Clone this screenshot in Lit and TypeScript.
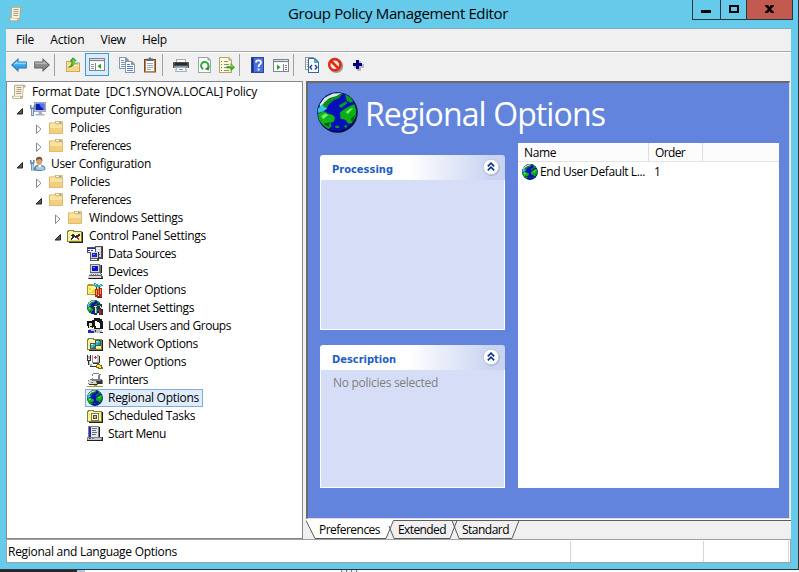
import { LitElement, html, css, svg, nothing, SVGTemplateResult } from "lit";
import { customElement, property } from "lit/decorators.js";

const p = (fill: string, d: string) => svg`<path fill=${fill} d=${d}></path>`;
const l = (stroke: string, d: string, w = 1) =>
  svg`<path fill="none" stroke=${stroke} stroke-width=${w} d=${d}></path>`;

const globe = svg`
  <circle cx="8" cy="8" r="7.9" fill="#001038"></circle>
  <circle cx="7.8" cy="7.7" r="7.5" fill="#0610b8"></circle>
  ${p("#0c8c24", "M.8 6.2 L2 3.4 L4.6 1.2 L8 .4 L10 .5 L8.6 2.4 L6.6 3.2 L4.8 4.6 L3.8 6.4 L2 7Z")}
  ${p("#dcecdc", "M1 5 L3 2.2 L6.3 .6 L9.4 .5 L7.6 1.6 L4.8 2.3 L2.8 4.1 L1.5 6Z")}
  ${p("#38c4dc", "M.4 6.6 L2 4.6 L2.8 5.8 L4 6.4 L2.4 7.6 L.4 8.2Z")}
  ${p("#10b41c", "M.4 8.6 L2.6 7.4 L4.2 8.4 L6.2 9 L7 10 L6.6 11.6 L5.2 12 L5.6 13.4 L4.4 14.4 L2.2 12.8 L.8 10.8Z")}
  ${p("#0cae18", "M9 8 L10.4 6.8 L12.6 5.6 L14.6 4.8 L15.3 7 L15.1 9.8 L13.6 12.2 L12.2 12.3 L11 10.8 L9.2 10.4Z")}
  ${p("#0c9c20", "M11 .9 L13 2 L14.2 3.6 L13 4.2 L11.6 3.4Z M8.4 5.4 L11.2 3.6 L11.8 4.4 L9.4 6.2Z M10.4 13.3 L11.8 12.8 L11.4 14.2Z M7.2 13.2 h1.4 v.8 h-1.400Z")}
  ${p("#70ec68", "M1.6 9.4 L3.2 8.4 L4.4 9 L2.4 10.6Z M11.2 7.8 L13 6.4 L14.2 6.2 L12 8.6Z")}
  ${p("#005c10", "M2.5 12.4 L5 11.8 L4.600 13.8Z M13 10.5 L15 9 L13.8 11.8Z")}`;

const folder98 = svg`
  ${p("#808040", "M0 3 h1 v-1 h6 v1 h8 v11 h-15Z")}
  ${p("#fdf6a0", "M1 4 h13 v9 h-13Z M2 3 h4 v1 h-4Z")}
  ${p("#e8dc60", "M2 6 h1v1h-1Z M2 9 h1v1h-1Z M3 12 h10v1h-10Z M12 5 h2v1h-2Z")}
  ${p("#202020", "M15 4 h1 v11 h-14 v-1 h13Z")}`;

const frame = svg`${p("#7b8490", "M0 2 h16 v13 h-16Z")}${p("#fff", "M1 6 h14 v8 h-14Z")}
  ${p("#d4dae2", "M1 3 h14 v1 h-14Z")}${p("#eef1f4", "M1 5 h14 v1 h-14Z")}${p("#fff", "M11 3h1v1h-1Z M13 3h1v1h-1Z")}`;

const ICONS: Record<string, SVGTemplateResult> = {
  globe,
  scroll: svg`
    ${p("#b8a47c", "M3 2 Q3 .8 5 .8 H13 Q14.8 .8 14.6 2.8 L14 3.6 H12.6 L12 13 Q12 15 10 15 H3 Q1 15 1 13 V11.8 H3Z")}
    ${p("#f8f0dc", "M4 1.8 H12 L11.4 12 H3.8Z")}
    ${p("#fffdf2", "M2 12.6 H9.2 V14.2 H3 Q2 14 2 12.6Z")}
    ${p("#e9d8ae", "M12.7 1.7 Q13.8 1.7 13.6 2.8 H12.6Z M9.8 12.6 H11 Q11 14 9.8 14.2Z")}
    ${l("#a99d86", "M5.5 3.5 H10.5 M5.5 5.5 H10.5 M5.3 7.5 H10.3 M5.3 9.5 H10.2")}`,
  folder: svg`
    ${p("#d5aa50", "M1 3.2 Q1 2.5 1.8 2.5 H7 V1.5 Q7 1 7.6 1 H14 Q14.8 1 14.8 1.7 V13.2 Q14.8 14 14 14 H1.8 Q1 14 1 13Z")}
    ${p("#fff", "M8 1.8 H13.8 V3.2 H8Z")}${p("#58a8dc", "M11 2 h2.4 v1 h-2.4Z")}
    ${p("#fae3a0", "M1.8 3.3 H7.3 L8.2 4.2 H14 V13.2 H1.8Z")}
    ${p("#f1cf7e", "M1.8 8 H14 V13.2 H1.8Z")}`,
  computer: svg`
    ${p("#8d98a8", "M4 0 H16 V10 H4Z")}${p("#dfe6ee", "M4.8 .8 H15.2 V9.2 H4.8Z")}
    ${p("#0a1cb4", "M5.5 1.6 H14.4 V8.2 H5.5Z")}${p("#4f78f0", "M9 1.6 H14.4 V8.2 L11 5Z")}
    ${p("#a8b0bc", "M8.5 10 h3.5 v2 h2.5 v1.5 h-9 V12 h3Z")}
    ${p("#6888a8", "M0 3 H1.500 V5.5 H3.5 V3 H5 V6.4 L3.9 7.5 V14 H1.1 V7.5 L0 6.4Z")}${p("#c8e0f4", "M2 7 h1 v6 h-1Z")}`,
  user: svg`
    ${p("#5a86ae", "M3.5 14.5 Q3.5 8.8 9 8.8 Q15.5 8.8 15.5 13 Q15 15 8 15Z")}${p("#a6cbe6", "M6 11 L9 9.5 L14 11 L14.5 13.4 Q10 14.500 6 13.600Z")}
    ${p("#fff", "M8 9 L10 12 L11.5 9Z")}
    <ellipse cx="9.2" cy="5" rx="3" ry="3.9" fill="#d8a070"></ellipse>
    ${p("#7b5536", "M6 5 Q5.4 .7 9.400 .7 Q12.8 .9 12.4 5.4 Q11.6 2.9 9.6 2.900 Q7.5 2.8 6 5Z")}
    ${p("#6888a8", "M0 4 H1.500 V6.2 H3 V4 H4.6 V7 L3.6 8.4 V14.5 H1 V8.4 L0 7Z")}${p("#c8e0f4", "M1.9 8 h.9 v6 h-.9Z")}`,
  cpanel: svg`${folder98}${p("#fff", "M4 6 h8 v6 h-8Z")}
    ${p("#303030", "M3 7 h2v-1h2v1h1v1h1v-1h2v-1h2v2h-1v1h-2v1h-2v-1h-1v1h-2v2h-1v-2h1v-2h-1v-1h-1Z")}${p("#e02020", "M10 9h1v1h1v2h-1v-1h-1Z")}${p("#2828c8", "M5 10h1v1h-1Z")}`,
  datasources: svg`
    ${p("#505058", "M0 1 H9 V7 H0Z M8 0 H16 V13 H12 V15 H3 V5 H8Z")}${p("#fff", "M1 2 H8 V6 H1Z")}
    ${p("#2020d0", "M1 2h7v1h-7Z M1 4h2v1h-2Z M4 4h2v1h-2Z")}
    ${p("#d4d4d4", "M9 1 H14 V11 H12 V6 H9Z M4 6 H11 V12 H4Z")}${p("#2020d0", "M5 7h5v4h-5Z")}${p("#58a0ff", "M6 8h2v1h-2Z")}${p("#f8f8f8", "M9 2h4v1h-4Z M9 4h4v1h-4Z M4 13h6v1h-6Z")}
    ${p("#303040", "M11 6h1v8h-1Z M15 1h1v12h-1Z")}${p("#20a020", "M12 8h1v1h-1Z")}`,
  devices: svg`
    ${p("#707078", "M3 0 H13 V1 H14 V9 H3Z")}${p("#dcdcdc", "M4 1 H12 V8 H4Z")}${p("#0a14c8", "M5 2 H11 V7 H5Z")}${p("#4fa0ff", "M6 3h2v1h-2Z")}
    ${p("#606068", "M3 8h11v2h1v2h1v3h-15v-3h1v-2h1Z")}${p("#d8d8d8", "M3 9h10v1h1v1h-12v-1h1Z M1 12h13v2h-13Z")}
    ${p("#808088", "M4 10h1v1h-1Z M6 10h1v1h-1Z M8 10h1v1h-1Z M10 10h1v1h-1Z")}${p("#181820", "M14 1h1v8h-1Z M2 14h14v1h-14Z")}`,
  folderopt: svg`
    ${p("#a89820", "M0 3h1v-1h5v1h6v10h-12Z")}${p("#fff28c", "M1 4h10v8h-10Z")}${p("#f0d820", "M2 6h2v2h-2Z M5 8h3v3h-3Z M2 10h2v1h-2Z")}
    ${p("#20a8c8", "M7 1h2v1h2v1h2v-1h2v1h1v1h-2v1h-6v-1h-2Z")}${p("#a0f0ff", "M8 2h1v1h-1Z M13 3h1v1h-1Z")}
    ${p("#303030", "M9 5h1v2h-1Z M12 5h1v2h-1Z M10 14h5v2h-5Z")}
    ${p("#c82010", "M8 7h3v8h-3Z M12 6h3v9h-3Z")}${p("#ff9080", "M9 8h1v5h-1Z M13 7h1v5h-1Z")}`,
  internet: svg`<g transform="scale(.9)">${globe}</g>
    ${p("#303038", "M5 6h2v-1h3v1h3v-2h2v3h-1v2h2v6h-4v-5h-2v5h-3v-6h-2Z")}${p("#e0e0e8", "M7 6h3v1h-1v6h-1v-6h-1Z M13 6h1v2h-1Z")}${p("#c82018", "M12 10h2v5h-1v-2h-1Z")}${p("#20b8c8", "M9 8h1v5h-1Z")}`,
  users: svg`
    ${p("#181818", "M7 0h6v1h2v2h1v8h-3v1h-6v-3h-2v-7h2Z")}${p("#fff", "M8 3h2v1h2v4h1v2h-4v-2h-1Z M12 5h1v3h-1Z")}
    ${p("#101010", "M0 3h6v2h1v3h-1v2h-5v-2h-1Z")}${p("#e8d8c0", "M2 5h3v3h-2v1h2v1h-3Z")}
    ${p("#c0c0c0", "M2 11h11v1h2v3h-14v-2h1Z")}${p("#1828b8", "M1 12h3v1h3v2h-6Z")}${p("#303030", "M8 12h1v2h-1Z M13 14h3v1h-3Z")}`,
  network: svg`${folder98}${p("#505050", "M8 4h6v6h-6Z M3 7h6v6h-6Z")}${p("#20c8c8", "M9 5h4v4h-4Z M4 8h4v4h-4Z")}${p("#b8ffff", "M9 5h2v1h-2Z M4 8h2v1h-2Z")}${p("#1890a0", "M11 7h2v2h-2Z M6 10h2v2h-2Z")}`,
  power: svg`
    ${p("#909090", "M5 1h7v8h-7Z")}${p("#fff", "M6 1h4v7h-4Z")}${p("#c8c8c8", "M10 2h2v6h-2Z")}${p("#e02020", "M7 3h3v1h-3Z M8 2h1v3h-1Z")}
    ${p("#303030", "M0 1h1v5h2v-5h1v6h-1v3h2v2h4v1h-6v-2h-2v-4h-1Z M12 2h1v7h-1Z M6 9h6v1h-6Z")}${p("#b0b0b0", "M1 2h2v3h-2Z M2 7h1v3h2v2h-2v-1h-1Z")}
    ${p("#806c10", "M10 10h3v1h2v2h1v2h-5v-1h-2v-3h1Z")}${p("#ffe060", "M10 11h3v1h1v2h-2v-1h-2Z")}`,
  printers: svg`
    ${p("#808088", "M5 2h1v-1h6v1h2v1h-1v4h2v1h1v4h-5v1h-8v-1h-2v-4h2v-1h2Z")}${p("#fff", "M6 2h6v1h-1v4h-5v-1h-1v-2h1Z")}
    ${p("#d8d8d0", "M2 8h3v1h5v1h4v1h-4v1h-8v-1h-1v-2h1Z")}${p("#30b030", "M4 10h2v1h-2Z")}${p("#303030", "M9 9h5v-1h1v4h-5Z M2 12h8v1h-8Z")}
    ${p("#a0a028", "M0 14h16v1h-16Z M7 13h3v2h-3Z")}`,
  tasks: svg`${folder98}${p("#807840", "M4 5h8v8h-8Z")}${p("#fff", "M5 6h6v6h-6Z")}${p("#484858", "M6 7h4v4h-4Z")}${p("#e8c040", "M7 8h2v2h-2Z")}`,
  startmenu: svg`
    ${p("#808080", "M1 0h11v11h3v4h-15v-4h1Z")}${p("#e8e8e8", "M2 1h9v10h-9Z")}${p("#1828c0", "M2 1h2v10h-2Z")}${p("#6c6c80", "M5 2h5v1h-5Z M5 4h4v1h-4Z M5 6h5v1h-5Z M5 8h4v1h-4Z")}
    ${p("#c8c8c8", "M1 12h13v2h-13Z")}${p("#202020", "M12 1h1v10h-1Z M0 14h16v1h-16Z M15 11h1v4h-1Z")}${p("#d02020", "M2 12h2v1h-2Z")}${p("#30a0d0", "M5 12h2v1h-2Z")}`,
  back: svg`${p("#2473ae", "M0 8 L7.5 1 V4.6 H15.8 V11.4 H7.5 V15Z")}${p("#35a5ec", "M1.6 8 L6.5 3.4 V5.6 H14.8 V10.4 H6.5 V12.6Z")}${p("#8cd4fa", "M1.8 7.8 L6.5 3.4 V5.6 H14.8 V7.2 H5Z")}`,
  forward: svg`${p("#606060", "M16 8 L8.5 1 V4.6 H.2 V11.4 H8.5 V15Z")}${p("#8b8b8b", "M14.4 8 L9.5 3.4 V5.6 H1.2 V10.4 H9.5 V12.6Z")}${p("#b4b4b4", "M13.6 7.3 L9.5 3.4 V5.6 H1.2 V7Z")}`,
  up: svg`${p("#c99c48", "M1 4 H7 L8 5.5 H15 V15 H1Z")}${p("#f6d88c", "M1.8 4.8 H6.5 L7.5 6.3 H14.2 V14.2 H1.8Z")}${p("#fff0b8", "M2 8 H14 V9 H2Z")}${p("#68b4e8", "M10 6h3v1.2h-3Z")}
    ${p("#2f9618", "M3.5 9.5 Q7 8.5 6.4 4.4 H4.5 L8 .2 L11.6 3.8 L9.6 4.2 Q10 9.8 3.5 10.8Z")}${p("#78d848", "M7.3 3.7 L8 1.6 L9.5 3.3 Q9.3 7.8 5.8 9.1Q8.4 7 7.3 3.7Z")}`,
  pane: svg`${frame}${l("#7b8490", "M6.5 7 V14")}${p("#8390a4", "M2 8h3v1h-3Z M2 10h3v1h-3Z M2 12h3v1h-3Z")}${p("#28a428", "M12 7.5 V13 L8.5 10.2Z")}`,
  run: svg`${frame}${l("#7b8490", "M10.5 7 V14")}${p("#68788e", "M12 8h2v1h-2Z M12 10h2v1h-2Z M12 12h2v1h-2Z")}${p("#28a428", "M4 7.5 V13 L7.5 10.2Z")}`,
  copy: svg`${p("#8b96a6", "M0 0 H7 L10 3 V12 H0Z")}${p("#fff", "M1 1 H6 V4 H9 V11 H1Z")}${l("#6c98cc", "M2 3.5h3 M2 5.5h5 M2 7.5h5 M2 9.5h5")}
    ${p("#8b96a6", "M6 4 H13 L16 7 V16 H6Z")}${p("#fff", "M7 5 H12 V8 H15 V15 H7Z")}${l("#4f80bc", "M8 7.5h3 M8 9.5h6 M8 11.5h6 M8 13.5h6")}`,
  paste: svg`${p("#7b4a26", "M2 2 H14 V15.5 H2Z")}${p("#bf844c", "M3 3h10v12h-10Z")}${p("#fbfcff", "M4 4 H12 V14 H4Z")}${p("#626a74", "M5 3 V1.5 H7 L7.6 .2 H8.5 L9.2 1.5 H11 V4 H5Z")}${l("#9ca8b8", "M5 6.5h6 M5 8.5h6 M5 10.5h6 M5 12.5h4")}`,
  print: svg`${p("#a4acb4", "M3 2 H13 V7 H3Z")}${p("#fafafa", "M4 3h8v3h-8Z")}${p("#4c5054", "M1 5 H15 Q16 5 16 6 V11 H0 V6 Q0 5 1 5Z")}${p("#8e9498", "M1 9 H15 V11 H1Z")}${p("#282a2c", "M2 6h12v2h-12Z")}${p("#a4b2bf", "M3 10 H13 L14 15 H2Z")}${p("#f0f6fa", "M4 11h8l.6 3h-9.2Z")}${p("#64a8d0", "M6 12h4v1h-4Z")}`,
  refresh: svg`${p("#9ba4ae", "M1 0 H11 L14 3 V16 H1Z")}${p("#fff", "M2 1 H10.5 V3.5 H13 V15 H2Z")}
    ${l("#32a83c", "M6.2 12 A3.7 3.7 0 1 1 10.8 10.8", 2)}${p("#249028", "M12.6 9 L11.8 13.6 L7.6 12Z")}`,
  export: svg`${p("#b6a468", "M0 0 H10 L13 3 V16 H0Z")}${p("#fffbe0", "M1 1 H9.5 V3.5 H12 V15 H1Z")}${l("#8c8c80", "M5 4.5h4 M5 7.5h5 M5 10.5h4 M5 13.5h5")}${p("#6c6c60", "M2 4h1v1h-1Z M2 7h1v1h-1Z M2 10h1v1h-1Z M2 13h1v1h-1Z")}
    ${p("#41a71e", "M7.5 9 H11.5 V6 L16 10.3 L11.5 14.6 V11.6 H7.5Z")}${p("#98de60", "M8.3 9.7 H12.2 V7.8 L14.6 10 H8.3Z")}`,
  help: svg`${p("#2b459c", "M1 0 H14 V16 H1Z")}${p("#4a70dc", "M4 1 H13 V15 H4Z")}${p("#1b2e7c", "M2 1h1v14h-1Z")}
    ${l("#fff", "M6 5.6 Q6 3.4 8.5 3.4 Q11 3.4 11 5.4 Q11 6.8 9.6 7.5 Q8.6 8.1 8.6 10", 1.8)}${p("#fff", "M7.6 11.4h2v2h-2Z")}`,
  xml: svg`${p("#8c949c", "M1 0H10V13H1Z")}${p("#fff", "M2 1H9V12H2Z")}${l("#9aa8b8", "M2.5 3.5h2 M2.5 5.5h2 M2.5 7.5h2 M2.5 9.5h2")}
    ${p("#34689c", "M4 1 H11 L15 5 V16 H4Z")}${p("#fff", "M5 2 H10 V6 H14 V15 H5Z")}${p("#48b0e8", "M10 1.6 L14.4 6 H10Z")}${l("#203c94", "M8 8 L6 10.2 L8 12.5 M11 8 L13 10.2 L11 12.5", 1.4)}`,
  deny: svg`<circle cx="9.2" cy="9" r="5.8" fill="none" stroke="#a09890" stroke-width="2.4"></circle>
    <circle cx="7.8" cy="7.7" r="5.6" fill="#f4eeec" stroke="#e02a12" stroke-width="2.6"></circle>${l("#e02a12", "M4 4 L11.5 11.5", 2.6)}`,
  plus: svg`${p("#b8b8c4", "M7 4h4v3h3v4h-3v3h-4v-3h-3v-4h3Z")}${p("#00007c", "M6 3h3v3h3v3h-3v3h-3v-3h-3V6h3Z")}`,
};

/** Icon on a 16-unit grid. */
@customElement("ui-icon")
export class UiIcon extends LitElement {
  @property() name = "";
  static styles = css`
    :host { display: block; width: 16px; height: 16px; flex: none; }
    svg { display: block; width: 100%; height: 100%; overflow: visible; }
  `;
  render() {
    return html`<svg viewBox="0 0 16 16">${ICONS[this.name] ?? nothing}</svg>`;
  }
}

/** One line of text whose tracking is adjusted to a given width. */
@customElement("ui-label")
export class UiLabel extends LitElement {
  @property() text = "";
  @property({ type: Number }) width = 0;
  static styles = css`
    :host { display: block; flex: none; white-space: pre; }
    span { display: inline-block; }
  `;
  render() {
    return html`<span>${this.text}</span>`;
  }
  updated() {
    const el = this.renderRoot.querySelector("span")!;
    el.style.letterSpacing = "0px";
    const natural = el.getBoundingClientRect().width;
    if (this.width && natural) el.style.letterSpacing = `${(this.width - natural) / this.text.length}px`;
  }
}

interface Node { level: number; icon: string; text: string; width: number; open?: boolean; selected?: boolean }

const TREE: Node[] = [
  { level: 0, icon: "scroll", text: "Format Date  [DC1.SYNOVA.LOCAL] Policy", width: 225 },
  { level: 1, icon: "computer", text: "Computer Configuration", width: 131, open: true },
  { level: 2, icon: "folder", text: "Policies", width: 40, open: false },
  { level: 2, icon: "folder", text: "Preferences", width: 61, open: false },
  { level: 1, icon: "user", text: "User Configuration", width: 100, open: true },
  { level: 2, icon: "folder", text: "Policies", width: 40, open: false },
  { level: 2, icon: "folder", text: "Preferences", width: 61, open: true },
  { level: 3, icon: "folder", text: "Windows Settings", width: 94, open: false },
  { level: 3, icon: "cpanel", text: "Control Panel Settings", width: 117, open: true },
  { level: 4, icon: "datasources", text: "Data Sources", width: 68 },
  { level: 4, icon: "devices", text: "Devices", width: 40 },
  { level: 4, icon: "folderopt", text: "Folder Options", width: 78 },
  { level: 4, icon: "internet", text: "Internet Settings", width: 86 },
  { level: 4, icon: "users", text: "Local Users and Groups", width: 123 },
  { level: 4, icon: "network", text: "Network Options", width: 90 },
  { level: 4, icon: "power", text: "Power Options", width: 78 },
  { level: 4, icon: "printers", text: "Printers", width: 40 },
  { level: 4, icon: "globe", text: "Regional Options", width: 91, selected: true },
  { level: 4, icon: "tasks", text: "Scheduled Tasks", width: 87 },
  { level: 4, icon: "startmenu", text: "Start Menu", width: 58 },
];

@customElement("policy-tree")
export class PolicyTree extends LitElement {
  static styles = css`
    :host { display: block; padding-top: 1px; }
    .row { display: flex; align-items: center; height: 18px; padding-left: 2px; }
    .level-1 { padding-left: 9px; }
    .level-2 { padding-left: 28px; }
    .level-3 { padding-left: 47px; }
    .level-4 { padding-left: 78px; }
    .twist { width: 8px; height: 10px; margin: 2px 4px 0 0; flex: none; }
    .level-2 .twist, .level-3 .twist { margin-right: 3px; }
    .item { display: flex; align-items: center; height: 16px; border: 1px solid transparent; padding: 0 3px 0 1px; }
    .item ui-label { margin-left: 5px; line-height: 16px; }
    .level-2 .item ui-label, .level-3 .item ui-label { margin-left: 6px; }
    .selected { background: #deecfb; border-color: #84acdd; }
  `;
  render() {
    return TREE.map((n) => html`<div class="row level-${n.level}">
      ${n.open === undefined ? nothing : html`<svg class="twist" viewBox="0 0 8 10">
        ${n.open
          ? svg`<path d="M6.5 2.5 V8 H1Z" fill="#595959" stroke="#262626"></path>`
          : svg`<path d="M1.5 1 V9.5 L6 5.2Z" fill="#fff" stroke="#8a8a8a"></path>`}</svg>`}
      <div class="item ${n.selected ? "selected" : ""}">
        <ui-icon name=${n.icon}></ui-icon>
        <ui-label text=${n.text} width=${n.width}></ui-label>
      </div></div>`);
  }
}

@customElement("info-card")
export class InfoCard extends LitElement {
  @property() heading = "";
  @property({ type: Number }) width = 61;
  static styles = css`
    :host { display: flex; flex-direction: column; box-sizing: border-box; }
    .head { display: flex; align-items: center; height: 25px; padding: 0 4px 0 12px; border-radius: 3px 3px 0 0;
      background: linear-gradient(90deg, #fff 0 48%, #cad4f2 92%); color: #215dc6;
      font: bold 11px/25px "DejaVu Sans Condensed", "DejaVu Sans", sans-serif; font-stretch: condensed; }
    .head ui-label { flex: 1; padding-top: 3px; }
    .head svg { width: 20px; height: 20px; flex: none; margin-bottom: 1px; }
    .body { flex: 1; background: #d6def7; border: 1px solid #fff; border-top: 0; padding: 5px 12px; color: #808080; }
  `;
  render() {
    return html`<div class="head"><ui-label text=${this.heading} width=${this.width}></ui-label>
      <svg viewBox="0 0 20 20"><circle cx="10.6" cy="10.8" r="8.2" fill="#9eabcd"></circle>
        <circle cx="10" cy="10" r="7.8" fill="#fff" stroke="#c0c8dc"></circle>
        <path d="M6.8 9.4 L10 6.2 L13.2 9.4 M6.8 13.4 L10 10.2 L13.2 13.4" fill="none" stroke="#0c3192" stroke-width="1.6"></path></svg></div>
      <div class="body"><slot></slot></div>`;
  }
}

@customElement("app-root")
export class AppRoot extends LitElement {
  static styles = css`
    :host { display: block; width: 799px; height: 572px; overflow: hidden; background: #fff; color: #000;
      font: 12px/16px "Open Sans", "Noto Sans", sans-serif; }
    .window { box-sizing: border-box; height: 570px; background: #66caea; border: solid #2c3438; border-width: 0 1px 1px 0;
      padding: 0 7px 6px 6px; display: flex; flex-direction: column; }
    .title { display: flex; height: 28px; flex: none; position: relative; padding-left: 2px; }
    .title > ui-icon { margin-top: 6px; }
    .title > ui-label { margin: 3px 0 0 264px; font-size: 15px; line-height: 21px; }
    .caption { display: flex; position: absolute; left: 686px; top: 0; border: solid #26363e; border-width: 0 1px 1px; height: 19px; }
    .caption svg { width: 27px; height: 19px; border-right: 1px solid #26363e; }
    .caption .max { width: 25px; }
    .caption .close { width: 45px; border: 0; background: #c35a50; }
    .client { flex: 1; background: #f0f0f0; border-top: 1px solid #86a8c0; display: flex; flex-direction: column; min-height: 0; }
    .menu { display: flex; gap: 16.3px; height: 22px; padding-left: 10px; border-bottom: 1px solid #a8aaae; line-height: 22px; }
    .tools { display: flex; align-items: center; height: 23px; padding: 0 0 5px 5px; border-top: 1px solid #fff; }
    .gap-4 { margin-left: 4px; } .gap-6 { margin-left: 6px; } .gap-7 { margin-left: 7px; }
    .gap-8 { margin-left: 8px; } .gap-10 { margin-left: 10px; }
    .sep { width: 1px; height: 22px; background: #a0a0a0; flex: none; }
    .pressed { box-sizing: border-box; width: 24px; height: 23px; background: #dcebf9; border: 1px solid #3c9be0; padding: 2px 3px; }
    .main { display: flex; height: 458px; flex: none; }
    .tree { box-sizing: border-box; width: 297px; border: 1px solid #828790; background: #fff; }
    .right { margin-left: 3px; flex: 1; display: flex; flex-direction: column; }
    .pane { box-sizing: border-box; height: 438px; border: solid; border-width: 2px 1px 1px 2px;
      border-color: #696969 #dcdcdc #dcdcdc #696969; background: #6384dd; display: flex; flex-direction: column;
      margin-right: 1px; }
    .hero { display: flex; height: 60px; padding-left: 9px; color: #fff; }
    .hero ui-icon { width: 41px; height: 41px; margin-top: 9px; }
    .hero ui-label { font-size: 32px; line-height: 40px; margin: 11px 0 0 7px; }
    .cols { display: flex; height: 345px; padding: 0 10px 0 12px; }
    .cards { width: 185px; padding-top: 12px; display: flex; flex-direction: column; gap: 15px; }
    .card-1 { height: 175px; } .card-2 { height: 143px; }
    .list { flex: 1; margin-left: 13px; background: #fff; }
    .head { display: flex; height: 18px; border-bottom: 1px solid #e4e4e4; line-height: 20px; background: #fcfcfc; }
    .head div { border-right: 1px solid #dedede; padding-left: 6px; box-sizing: border-box; }
    .name { width: 131px; } .order { width: 54px; }
    .entry { display: flex; align-items: center; padding: 1px 0 0 4px; height: 18px; }
    .entry ui-label { margin-left: 2px; } .entry .num { margin-left: 9px; }
    .tabs { position: relative; height: 20px; display: flex; padding-left: 13px; line-height: 19px; }
    .tabs svg { position: absolute; left: 0; top: 0; width: 485px; height: 20px; }
    .tabs ui-label { position: relative; margin-right: 18px; padding-top: 1px; }
    .tabs ui-label + ui-label { margin-right: 16px; }
    .status { box-sizing: border-box; height: 24px; border: 1px solid #a0a0a0; background: #fff; display: flex; line-height: 24px; }
    .status div { box-sizing: border-box; border-right: 1px solid #d6d6d6; margin-top: 1px; }
    .s1 { width: 564px; padding-left: 1px; line-height: 22px; } .s2 { width: 133px; } .s3 { flex: 1; margin-right: 1px; }
    .behind { display: flex; height: 2px; }
    .behind .a { width: 77px; background: #2b262b; } .behind .b { width: 8px; background: #b4c6d8; }
    .behind .c { width: 256px; background: #fff; } .behind .d { width: 18px; background: repeating-linear-gradient(90deg, #777 0 1px, #eee 1px 5px); }
  `;
  render() {
    const label = (t: string, w: number, c = "") => html`<ui-label class=${c} text=${t} width=${w}></ui-label>`;
    const icon = (n: string, c = "") => html`<ui-icon class=${c} name=${n}></ui-icon>`;
    const sep = (c: string) => html`<div class="sep ${c}"></div>`;
    return html`<div class="window">
      <div class="title">${icon("scroll")}${label("Group Policy Management Editor", 220)}
        <div class="caption">
          <svg viewBox="0 0 27 19"><path d="M8 10h10v3h-10Z"></path></svg>
          <svg class="max" viewBox="0 0 25 19"><path d="M9 6h8v6h-8Z" fill="none" stroke="#000" stroke-width="2"></path></svg>
          <svg class="close" viewBox="0 0 45 19"><path d="M18 5h3l1.5 2L24 5h3v1l-3 3l3 3v1h-3l-1.500-2L21 13h-3v-1l3-3l-3-3Z"></path></svg>
        </div></div>
      <div class="client">
        <div class="menu">${label("File", 18)}${label("Action", 34)}${label("View", 25)}${label("Help", 25)}</div>
        <div class="tools">
          ${icon("back")}${icon("forward", "gap-7")}${sep("gap-4")}${icon("up", "gap-10")}
          <div class="pressed gap-4">${icon("pane")}</div>
          ${icon("copy", "gap-10")}${icon("paste", "gap-7")}${sep("gap-4")}
          ${icon("print", "gap-10")}${icon("refresh", "gap-8")}${icon("export", "gap-6")}${sep("gap-4")}
          ${icon("help", "gap-10")}${icon("run", "gap-7")}${sep("gap-4")}
          ${icon("xml", "gap-10")}${icon("deny", "gap-7")}${icon("plus", "gap-7")}
        </div>
        <div class="main">
          <div class="tree"><policy-tree></policy-tree></div>
          <div class="right">
            <div class="pane">
              <div class="hero">${icon("globe")}${label("Regional Options", 240)}</div>
              <div class="cols">
                <div class="cards">
                  <info-card class="card-1" heading="Processing" width="61"></info-card>
                  <info-card class="card-2" heading="Description" width="64">${label("No policies selected", 105)}</info-card>
                </div>
                <div class="list">
                  <div class="head"><div class="name">${label("Name", 32)}</div><div class="order">${label("Order", 30)}</div></div>
                  <div class="entry">${icon("globe")}${label("End User Default L...", 105)}${label("1", 6, "num")}</div>
                </div>
              </div>
            </div>
            <div class="tabs">
              <svg viewBox="0 0 485 20">
                <path d="M0 0 H485 V1 H88 L80 19.500 H9 L0 1Z" fill="#fff"></path>
                <path d="M0 1.500 L9 19.500 H80 L87.500 1.500 H485 M83 7 L88 19.500 H144 L151 1.500 M146 1.500 L153 19.500 H206 L213 1.500" fill="none" stroke="#5c5c5c"></path>
              </svg>
              ${label("Preferences", 61)}${label("Extended", 48)}${label("Standard", 47)}
            </div>
          </div>
        </div>
        <div class="status"><div class="s1">${label("Regional and Language Options", 169)}</div><div class="s2"></div><div class="s3"></div></div>
      </div></div>
      <div class="behind"><div class="a"></div><div class="b"></div><div class="c"></div><div class="d"></div></div>`;
  }
}
